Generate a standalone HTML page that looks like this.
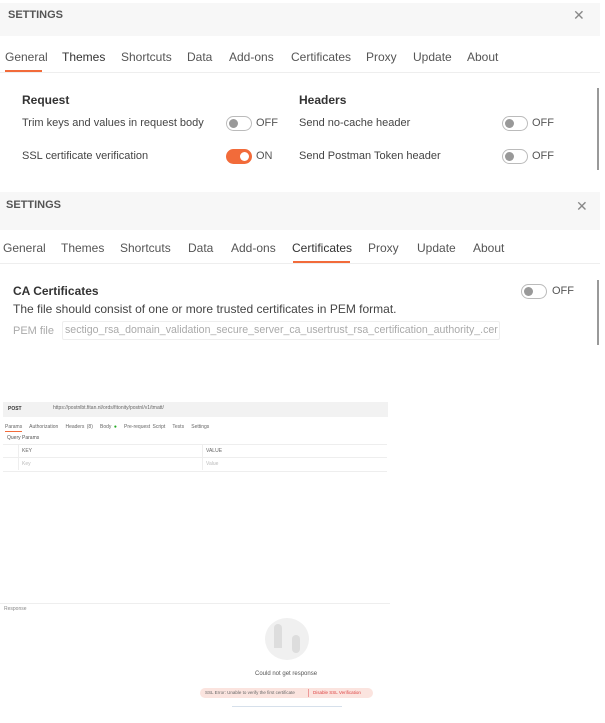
<!DOCTYPE html>
<html><head><style>
body{margin:0;width:605px;height:723px;background:#fff;font-family:"Liberation Sans",sans-serif;position:relative;overflow:hidden;color:#333}
.a{position:absolute;white-space:nowrap}
.band{position:absolute;left:0;width:600px;background:#f7f7f7}
.t{font-size:12px;color:#555}
.tog{position:absolute;width:24px;height:13px;border:1px solid #bbb;border-radius:8px;background:#fff}
.tog::after{content:"";position:absolute;left:2px;top:2px;width:9px;height:9px;border-radius:50%;background:#999}
.tog.on{background:#f26b3a;border-color:#f26b3a}
.tog.on::after{left:13px;background:#fff}
.lbl{font-size:11px;color:#555}
.s{font-size:11px;color:#444}
</style></head><body>
<!-- section 1 -->
<div class="band" style="top:3px;height:33px"></div>
<div class="a" style="left:8px;top:9px;font-size:11px;font-weight:bold;color:#555">SETTINGS</div>
<div class="a" style="left:573px;top:7px;font-size:14px;color:#888">✕</div>
<div class="a t" style="left:5px;top:50px">General</div>
<div class="a t" style="left:62px;top:50px;color:#333">Themes</div>
<div class="a t" style="left:121px;top:50px">Shortcuts</div>
<div class="a t" style="left:187px;top:50px">Data</div>
<div class="a t" style="left:229px;top:50px">Add-ons</div>
<div class="a t" style="left:291px;top:50px">Certificates</div>
<div class="a t" style="left:366px;top:50px">Proxy</div>
<div class="a t" style="left:413px;top:50px">Update</div>
<div class="a t" style="left:467px;top:50px">About</div>
<div class="a" style="left:5px;top:70px;width:37px;height:2px;background:#f26b3a"></div>
<div class="a" style="left:0;top:72px;width:600px;height:1px;background:#eee"></div>
<div class="a" style="left:597px;top:88px;width:2px;height:82px;background:#999"></div>
<div class="a" style="left:22px;top:93px;font-size:12px;font-weight:bold;color:#333">Request</div>
<div class="a" style="left:299px;top:93px;font-size:12px;font-weight:bold;color:#333">Headers</div>
<div class="a s" style="left:22px;top:117px">Trim keys and values in request body</div>
<div class="a s" style="left:22px;top:150px">SSL certificate verification</div>
<div class="a s" style="left:299px;top:117px">Send no-cache header</div>
<div class="a s" style="left:299px;top:150px">Send Postman Token header</div>
<div class="tog" style="left:226px;top:116px"></div><div class="a lbl" style="left:256px;top:117px">OFF</div>
<div class="tog on" style="left:226px;top:149px"></div><div class="a lbl" style="left:256px;top:150px">ON</div>
<div class="tog" style="left:502px;top:116px"></div><div class="a lbl" style="left:532px;top:117px">OFF</div>
<div class="tog" style="left:502px;top:149px"></div><div class="a lbl" style="left:532px;top:150px">OFF</div>
<!-- section 2 -->
<div class="band" style="top:192px;height:38px"></div>
<div class="a" style="left:6px;top:199px;font-size:11px;font-weight:bold;color:#555">SETTINGS</div>
<div class="a" style="left:576px;top:198px;font-size:14px;color:#888">✕</div>
<div class="a t" style="left:3px;top:241px">General</div>
<div class="a t" style="left:61px;top:241px">Themes</div>
<div class="a t" style="left:120px;top:241px">Shortcuts</div>
<div class="a t" style="left:188px;top:241px">Data</div>
<div class="a t" style="left:231px;top:241px">Add-ons</div>
<div class="a t" style="left:292px;top:241px;color:#333">Certificates</div>
<div class="a t" style="left:368px;top:241px">Proxy</div>
<div class="a t" style="left:417px;top:241px">Update</div>
<div class="a t" style="left:473px;top:241px">About</div>
<div class="a" style="left:293px;top:261px;width:57px;height:2px;background:#f26b3a"></div>
<div class="a" style="left:0;top:263px;width:600px;height:1px;background:#eee"></div>
<div class="a" style="left:597px;top:280px;width:2px;height:65px;background:#999"></div>
<div class="a" style="left:13px;top:284px;font-size:12px;font-weight:bold;color:#333">CA Certificates</div>
<div class="a s" style="left:13px;top:302px;font-size:12px">The file should consist of one or more trusted certificates in PEM format.</div>
<div class="tog" style="left:521px;top:284px"></div><div class="a lbl" style="left:552px;top:285px">OFF</div>
<div class="a" style="left:13px;top:325px;font-size:11px;color:#aaa">PEM file</div>
<div class="a" style="left:62px;top:321px;width:436px;height:17px;border:1px solid #eee;border-radius:2px"></div>
<div class="a" style="left:65px;top:324px;font-size:10.6px;color:#aaa">sectigo_rsa_domain_validation_secure_server_ca_usertrust_rsa_certification_authority_.cer</div>
<!-- section 3 -->
<div class="a" style="left:3px;top:402px;width:385px;height:15px;background:#f2f2f2"></div>
<div class="a" style="left:8px;top:406px;font-size:5px;font-weight:bold">POST</div>
<div class="a" style="left:53px;top:405px;font-size:5px;color:#666">https://postnlbt.fitan.nl/ords/fitonity/postnl/v1/tmatt/</div>
<div class="a" style="left:5px;top:424px;font-size:5px;color:#666;word-spacing:1px">Params &nbsp; Authorization &nbsp; Headers (8) &nbsp; Body <span style="color:#2a2">●</span> &nbsp; Pre-request Script &nbsp; Tests &nbsp; Settings</div>
<div class="a" style="left:5px;top:431px;width:17px;height:1px;background:#f26b3a"></div>
<div class="a" style="left:7px;top:435px;font-size:5px;color:#555">Query Params</div>
<div class="a" style="left:3px;top:444px;width:384px;height:26px;border-top:1px solid #eee;border-bottom:1px solid #eee"></div>
<div class="a" style="left:3px;top:457px;width:384px;height:1px;background:#eee"></div>
<div class="a" style="left:18px;top:444px;width:1px;height:26px;background:#eee"></div>
<div class="a" style="left:202px;top:444px;width:1px;height:26px;background:#eee"></div>
<div class="a" style="left:22px;top:448px;font-size:5px;color:#666">KEY</div>
<div class="a" style="left:206px;top:448px;font-size:5px;color:#666">VALUE</div>
<div class="a" style="left:22px;top:461px;font-size:5px;color:#bbb">Key</div>
<div class="a" style="left:206px;top:461px;font-size:5px;color:#bbb">Value</div>
<div class="a" style="left:0;top:603px;width:390px;height:1px;background:#eee"></div>
<div class="a" style="left:4px;top:606px;font-size:5px;color:#888">Response</div>
<div class="a" style="left:265px;top:618px;width:44px;height:42px;border-radius:50%;background:#f0f0f0"></div>
<div class="a" style="left:274px;top:624px;width:8px;height:24px;border-radius:4px 4px 0 0;background:#ddd"></div>
<div class="a" style="left:292px;top:635px;width:8px;height:18px;border-radius:4px;background:#ddd"></div>
<div class="a" style="left:255px;top:671px;font-size:6px;color:#555">Could not get response</div>
<div class="a" style="left:200px;top:688px;width:173px;height:10px;border-radius:5px;background:#fbe4df"></div>
<div class="a" style="left:205px;top:690px;font-size:4.5px;color:#666">SSL Error: Unable to verify the first certificate</div>
<div class="a" style="left:308px;top:689px;width:1px;height:8px;background:#e99"></div>
<div class="a" style="left:313px;top:690px;font-size:4.5px;color:#d44">Disable SSL Verification</div>
<div class="a" style="left:232px;top:706px;width:110px;height:1px;background:#bcd;opacity:.6"></div>
</body></html>
